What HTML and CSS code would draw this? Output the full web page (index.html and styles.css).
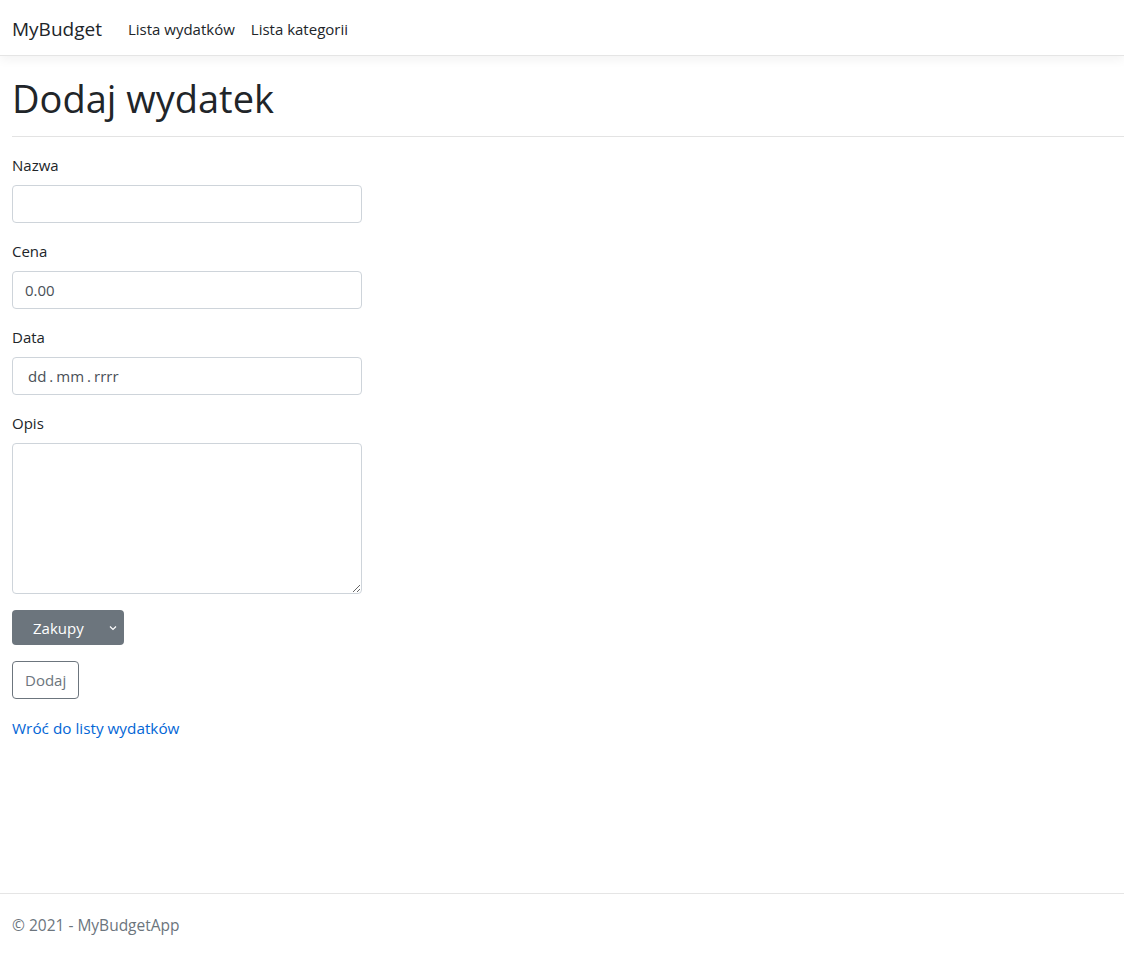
FILE: index.html
```html
<!DOCTYPE html>
<html lang="pl">
<head>
<meta charset="utf-8">
<title>Dodaj wydatek - MyBudget</title>
<link rel="stylesheet" href="styles.css">
</head>
<body>
<header class="topbar">
  <nav class="navbar">
    <a class="brand" href="#">MyBudget</a>
    <a class="nav-link" href="#">Lista wydatków</a>
    <a class="nav-link" href="#">Lista kategorii</a>
  </nav>
</header>
<main class="page">
  <h1 class="title">Dodaj wydatek</h1>
  <hr class="rule">
  <form class="form">
    <div class="group">
      <label class="label">Nazwa</label>
      <input class="control" type="text">
    </div>
    <div class="group">
      <label class="label">Cena</label>
      <input class="control" type="text" value="0.00">
    </div>
    <div class="group">
      <label class="label">Data</label>
      <div class="control date"><span>dd</span><span class="sep">.</span><span>mm</span><span class="sep">.</span><span>rrrr</span></div>
    </div>
    <div class="group">
      <label class="label">Opis</label>
      <textarea class="control area"></textarea>
    </div>
    <div class="group">
      <div class="select">
        <span>Zakupy</span>
        <svg class="chev" width="8" height="6" viewBox="0 0 8 6"><path d="M1 1.5 L4 4.5 L7 1.5" fill="none" stroke="#fff" stroke-width="1.2"/></svg>
      </div>
    </div>
    <div class="group">
      <button class="btn" type="button">Dodaj</button>
    </div>
  </form>
  <a class="back" href="#">Wróć do listy wydatków</a>
</main>
<footer class="footer">© 2021 - MyBudgetApp</footer>
</body>
</html>
```
FILE: styles.css
```css
* { box-sizing: border-box; }
html, body { margin: 0; padding: 0; height: 100%; }
body {
  font-family: "Open Sans", "Noto Sans", sans-serif;
  font-size: 15px;
  color: #212529;
  background: #fff;
  line-height: 24px;
  display: flex;
  flex-direction: column;
  min-height: 954px;
}
a { text-decoration: none; }
.topbar {
  height: 56px;
  border-bottom: 1px solid #e5e5e5;
  box-shadow: 0 4px 10px rgba(0,0,0,0.05);
  background: #fff;
}
.navbar {
  height: 55px;
  display: flex;
  align-items: center;
  padding: 3px 12px 0;
}
.brand {
  font-size: 19px;
  color: #212529;
  margin-right: 26px;
}
.nav-link {
  color: #212529;
  margin-right: 16px;
}
.page {
  flex: 1;
  padding: 16px 0 0 12px;
}
.title {
  font-size: 38px;
  font-weight: 400;
  line-height: 48px;
  margin: 2px 0 0;
}
.rule {
  border: 0;
  border-top: 1px solid #e3e3e3;
  margin: 14px 0 16px;
}
.form { width: 350px; }
.group { margin-bottom: 16px; }
.label {
  display: block;
  margin-bottom: 8px;
}
.control {
  display: block;
  width: 350px;
  height: 38px;
  border: 1px solid #ced4da;
  border-radius: 4px;
  padding: 6px 12px;
  font: inherit;
  color: #495057;
  background: #fff;
}
.date {
  display: flex;
  align-items: center;
  padding-left: 15px;
  color: #495057;
}
.date .sep { margin: 0 3px; }
.area {
  height: 151px;
  resize: vertical;
}
.select {
  width: 112px;
  height: 35px;
  background: #6c757d;
  border-radius: 4px;
  color: #fff;
  display: flex;
  align-items: center;
  padding: 0 0 0 21px;
  position: relative;
}
.chev { position: absolute; right: 7px; top: 15px; }
.btn {
  font: inherit;
  color: #6c757d;
  background: #fff;
  border: 1px solid #6c757d;
  border-radius: 4px;
  height: 38px;
  padding: 0 12px;
}
.back { color: #0366d6; display: inline-block; margin-top: 1px; font-size: 15.3px; }
.footer {
  border-top: 1px solid #e5e5e5;
  height: 61px;
  line-height: 62px;
  padding-left: 12px;
  color: #6c757d;
  font-size: 15.5px;
}
```
